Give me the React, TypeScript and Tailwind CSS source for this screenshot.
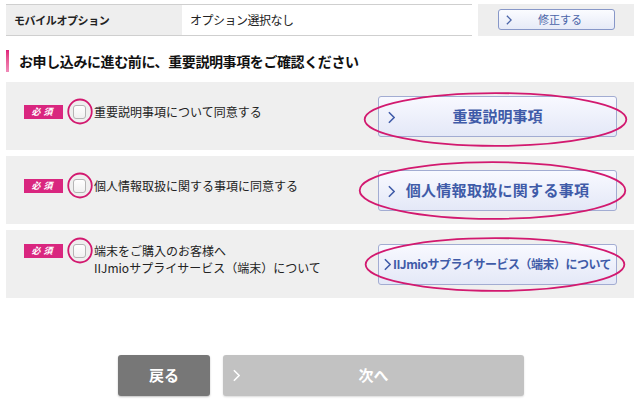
import React from "react";

const Chevron: React.FC<{ className?: string }> = ({ className }) => (
  <svg viewBox="0 0 8 14" className={className} fill="none">
    <polyline points="1,1 7,7 1,13" stroke="currentColor" strokeWidth="1.8" strokeLinejoin="miter" />
  </svg>
);

// hand-drawn style annotation ring
const Ring: React.FC<{ className: string }> = ({ className }) => (
  <div className={`pointer-events-none absolute ${className}`}>
    <svg className="block h-full w-full overflow-visible" viewBox="0 0 100 100" preserveAspectRatio="none" fill="none">
      <ellipse cx="50" cy="50" rx="49" ry="48" stroke="#d2196f" strokeWidth="1.8" vectorEffect="non-scaling-stroke" />
    </svg>
  </div>
);

type Row = {
  label: string[];
  button: string;
  btnText: string;
  ring: string;
  inline?: boolean;
};

const rows: Row[] = [
  {
    label: ["重要説明事項について同意する"],
    button: "重要説明事項",
    btnText: "text-[15px] tracking-[0px]",
    ring: "-left-[16px] -right-[12px] -top-[4px] -bottom-[10px]",
  },
  {
    label: ["個人情報取扱に関する事項に同意する"],
    button: "個人情報取扱に関する事項",
    btnText: "text-[15px] tracking-[0.3px]",
    ring: "-left-[21px] -right-[11px] -top-[9px] -bottom-[9px]",
  },
  {
    label: ["端末をご購入のお客様へ", "IIJmioサプライサービス（端末）について"],
    button: "IIJmioサプライサービス（端末）について",
    btnText: "text-[12px] tracking-[-0.5px]",
    ring: "-left-[15px] -right-[10px] -top-[7px] -bottom-[7px]",
    inline: true,
  },
];

export default function App() {
  return (
    <div
      className="w-[640px] h-[413px] overflow-hidden bg-white px-[6px] pt-[4px] text-[#222]"
      style={{ fontFamily: '"Noto Sans CJK JP", sans-serif' }}
    >
      {/* option summary row */}
      <div className="flex h-[32px]">
        <div className="flex w-[466px] border-y border-[#cfcfcf]">
          <div className="flex w-[176px] items-center bg-[#eeeeee] pl-[8px] text-[11px] font-bold tracking-[-0.4px]">
            モバイルオプション
          </div>
          <div className="flex flex-1 items-center pl-[8px] text-[12px] tracking-[-0.5px]">オプション選択なし</div>
        </div>
        <div className="ml-[6px] flex flex-1 items-start justify-center bg-[#eeeeee] pt-[5px]">
          <button className="relative flex h-[21px] w-[117px] items-center justify-center rounded-[3px] border border-[#8797c8] bg-gradient-to-b from-[#fbfcff] to-[#e6eaf7] text-[11px] text-[#4a64a8]">
            <Chevron className="absolute left-[7px] top-[5px] h-[10px] w-[6px]" />
            <span className="ml-[8px]">修正する</span>
          </button>
        </div>
      </div>

      {/* heading */}
      <div className="mt-[14px] flex h-[22px] items-center">
        <div className="h-[22px] w-[3px] bg-gradient-to-b from-[#e0217c] to-[#f08bb9]" />
        <h2 className="ml-[10px] text-[14px] font-bold tracking-[-0.4px] text-[#111]">
          お申し込みに進む前に、重要説明事項をご確認ください
        </h2>
      </div>

      {/* agreement rows */}
      <div className="mt-[10px] flex flex-col gap-[6px]">
        {rows.map((r) => (
          <div key={r.button} className="flex h-[68px] items-center bg-[#efefef] pr-[17px]">
            <div className="flex flex-1 items-center self-stretch pb-[10px] pl-[18px]">
              <div className="flex items-start">
                <span className="mt-[2px] flex h-[14px] w-[39px] items-center justify-center bg-[#d9267f] text-[9px] font-bold italic tracking-[3px] text-white">
                  必須
                </span>
                <span className="relative ml-[10px] mt-[2px] h-[14px] w-[13px] rounded-[3px] border border-[#b5b5b5] bg-gradient-to-b from-white to-[#f1f1f1]">
                  <Ring className="-left-[6px] -right-[7px] -top-[7px] -bottom-[6px]" />
                </span>
                <div className="ml-[8px] text-[12px] leading-[17px]">
                  {r.label.map((l) => (
                    <div key={l}>{l}</div>
                  ))}
                </div>
              </div>
            </div>
            <div className="relative">
              <button
                className={`relative flex h-[41px] w-[239px] items-center justify-center whitespace-nowrap rounded-[3px] border border-[#a2acd2] bg-gradient-to-b from-[#f8f9ff] to-[#e4e8f7] font-bold text-[#3f5ba8] ${r.btnText}`}
              >
                {r.inline ? (
                  <Chevron className="mr-[2px] h-[13px] w-[7px]" />
                ) : (
                  <Chevron className="absolute left-[9px] top-[14px] h-[13px] w-[7px]" />
                )}
                <span>{r.button}</span>
              </button>
              <Ring className={r.ring} />
            </div>
          </div>
        ))}
      </div>

      {/* footer buttons */}
      <div className="mt-[57px] flex justify-center gap-[13px] pl-[2px]">
        <button className="h-[41px] w-[92px] rounded-[3px] bg-[#777777] text-[15px] font-bold text-white shadow-[0_1px_2px_rgba(0,0,0,0.25)]">
          戻る
        </button>
        <button className="relative h-[41px] w-[301px] rounded-[3px] bg-[#c2c2c2] text-[15px] font-bold text-white shadow-[0_1px_2px_rgba(0,0,0,0.15)]">
          <Chevron className="absolute left-[10px] top-[14px] h-[13px] w-[7px]" />
          次へ
        </button>
      </div>
    </div>
  );
}
